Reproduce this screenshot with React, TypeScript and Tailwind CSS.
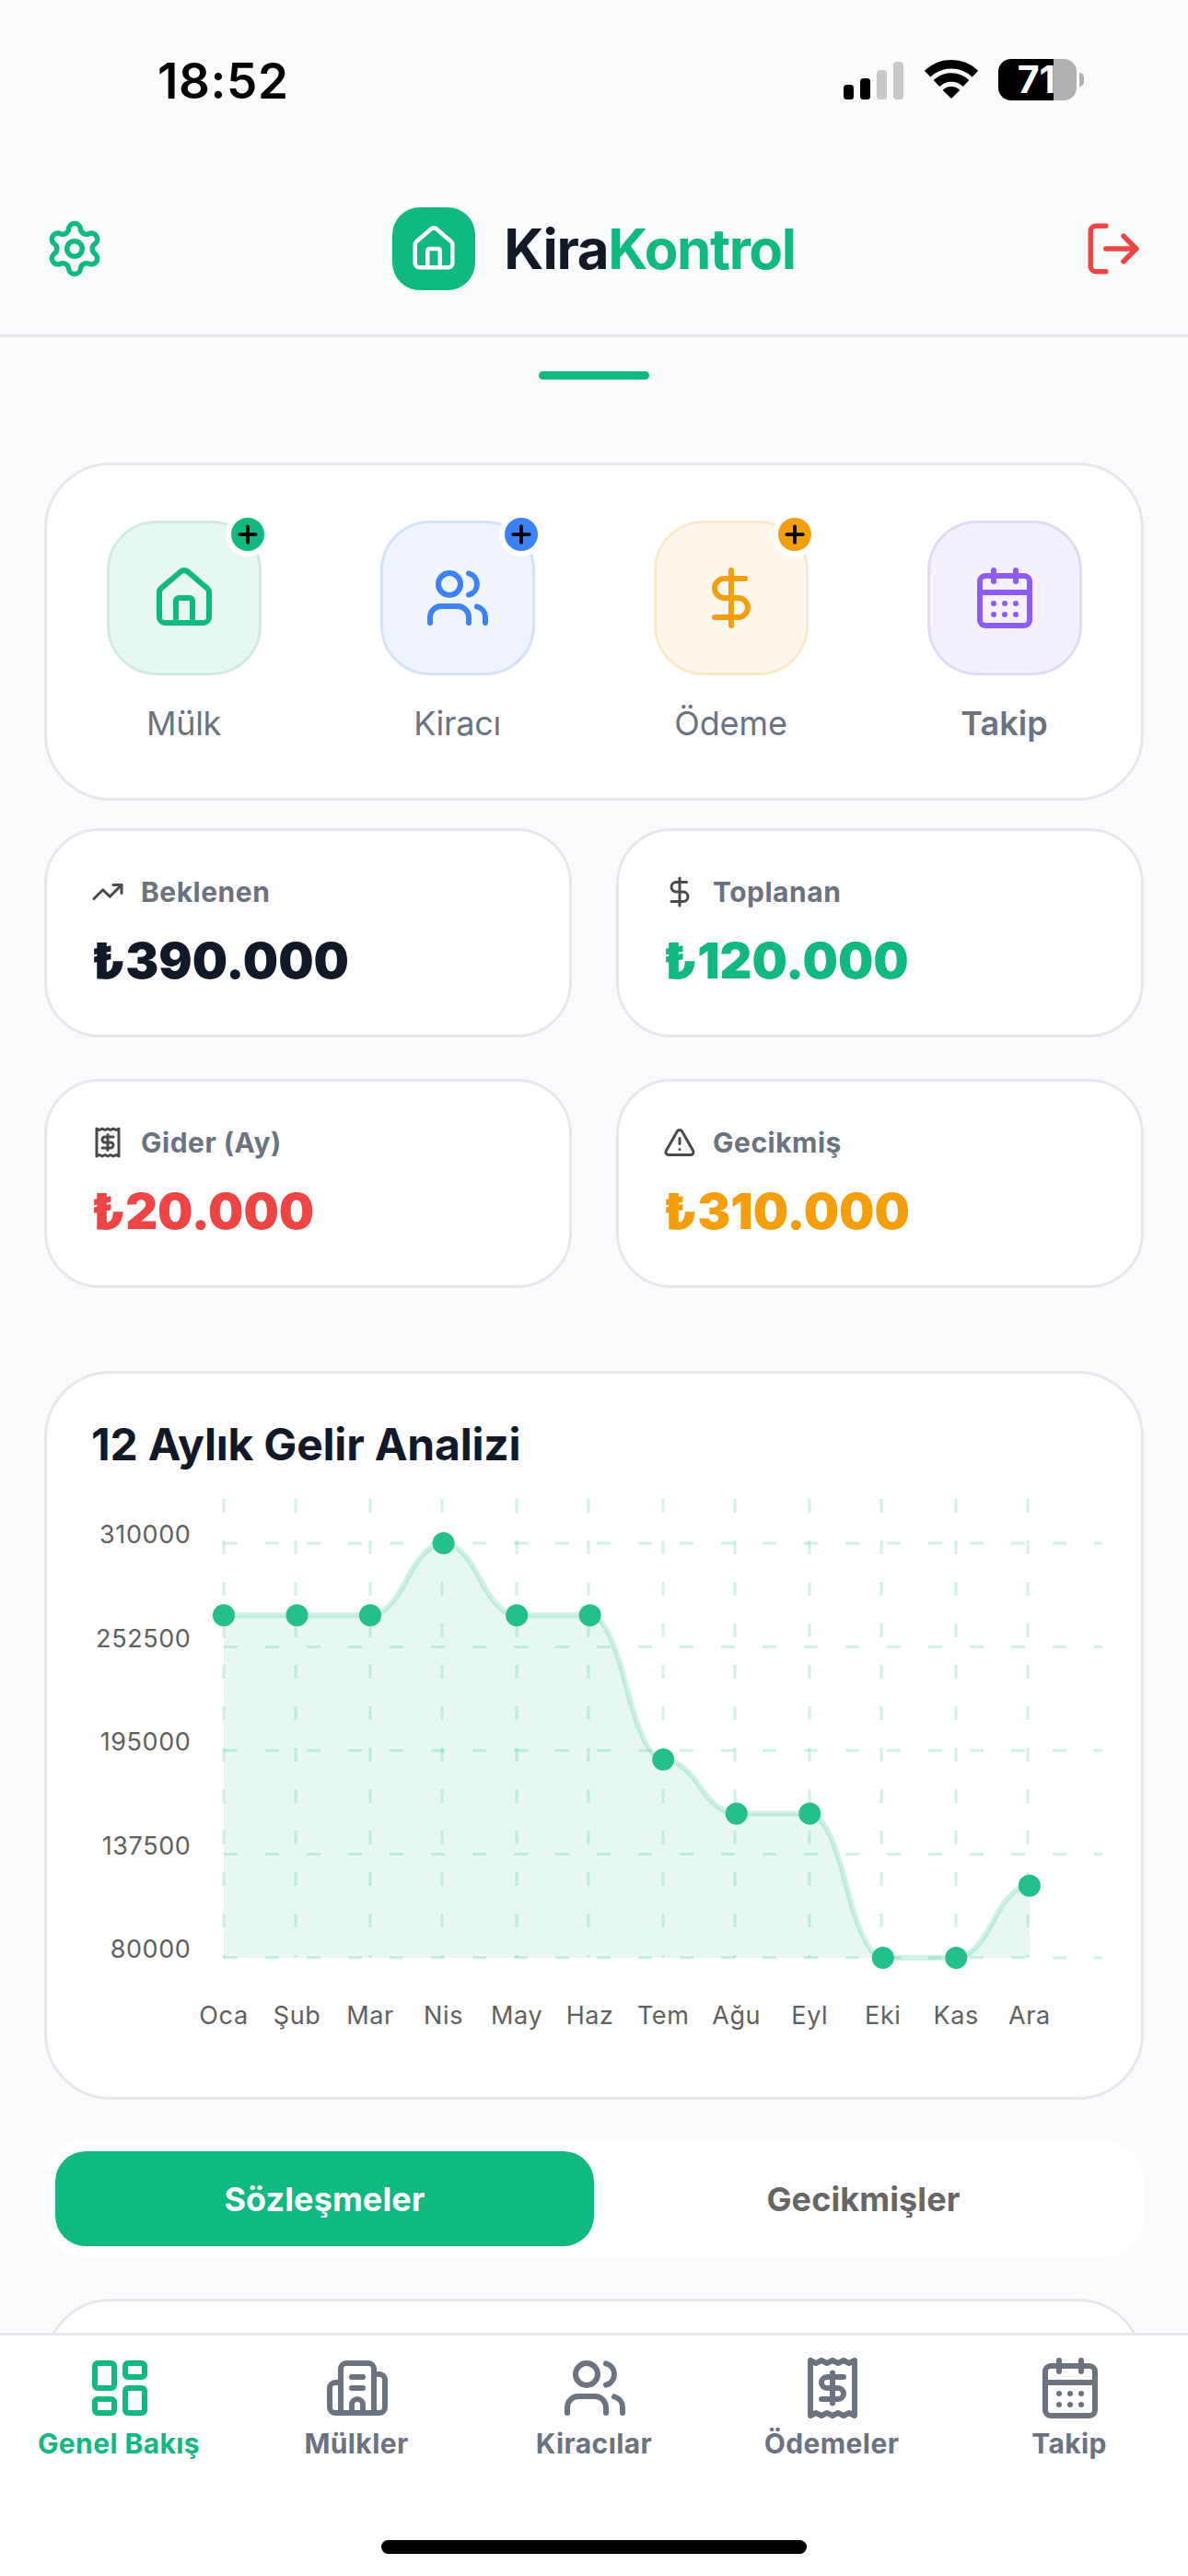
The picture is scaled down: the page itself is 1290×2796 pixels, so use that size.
import React from "react";
import {
  Building2,
  CalendarDays,
  DollarSign,
  House,
  LayoutDashboard,
  LogOut,
  Plus,
  Receipt,
  Settings,
  TrendingUp,
  TriangleAlert,
  Users,
} from "lucide-react";

const months = ["Oca", "Şub", "Mar", "Nis", "May", "Haz", "Tem", "Ağu", "Eyl", "Eki", "Kas", "Ara"];
const income = [270000, 270000, 270000, 310000, 270000, 270000, 190000, 160000, 160000, 80000, 80000, 120000];
const ticks = [310000, 252500, 195000, 137500, 80000];

function StatusBar() {
  return (
    <div className="flex h-[180px] items-start justify-between pl-[171px] pr-[113px]">
      <span className="mt-[56px] text-[53px] leading-[64px] font-semibold tracking-[0.6px] text-black">18:52</span>
      <div className="mt-[64px] flex h-[45px] items-center">
        <svg width="66" height="42" viewBox="0 0 66 42">
          <rect x="0" y="26" width="11" height="16" rx="3.5" fill="#000" />
          <rect x="18" y="19" width="11" height="23" rx="3.5" fill="#000" />
          <rect x="36" y="10" width="11" height="32" rx="3.5" fill="#c8c9ca" />
          <rect x="54" y="1" width="11" height="41" rx="3.5" fill="#c8c9ca" />
        </svg>
        <svg className="ml-[22px]" width="58" height="43" viewBox="0 0 58 43">
          <g fill="none" stroke="#000" strokeWidth="9.4">
            <path d="M3.100 15.200A37.300 37.300 0 0 1 54.900 15.200" />
            <path d="M13 25.500A23 23 0 0 1 45 25.500" />
          </g>
          <path d="M29 41.500L20.200 32.800A13 13 0 0 1 37.800 32.800Z" stroke="#000" strokeLinejoin="round" />
        </svg>
        <div className="ml-[22px] flex h-[45px] w-[85px] items-center justify-center rounded-[14px] bg-linear-to-r from-black from-[60px] to-[#b0b1b2] to-[60px]">
          <span className="-ml-[2px] text-[41px] leading-[45px] font-bold text-white">71</span>
        </div>
        <div className="ml-[3px] h-[15px] w-[5px] rounded-r-full bg-[#b0b1b2]" />
      </div>
    </div>
  );
}

function Header() {
  return (
    <header className="flex h-[186px] items-start justify-between border-b-[3px] border-[#e5e7eb] px-12 pt-[45px]">
      <Settings className="mt-3 text-[#10b981]" size={66} strokeWidth={2} />
      <div className="flex h-[90px] items-center gap-[31px]">
        <div className="flex size-[90px] items-center justify-center rounded-[30px] bg-[#10b981] text-white">
          <House size={54} strokeWidth={2} />
        </div>
        <h1 className="text-[60px] leading-[72px] font-bold tracking-[-1.350px] text-[#111827]">
          Kira<span className="text-[#10b981]">Kontrol</span>
        </h1>
      </div>
      <LogOut className="mt-3 text-[#ef4444]" size={66} strokeWidth={2} />
    </header>
  );
}

const actions = [
  { label: "Mülk", icon: House, tile: "bg-[#e7f8f2] border-[#cfeae0] text-[#10b981]", badge: "bg-[#10b981]", text: "font-normal tracking-[-0.300px]" },
  { label: "Kiracı", icon: Users, tile: "bg-[#eff4ff] border-[#d3e1f6] text-[#3b82f6]", badge: "bg-[#3b82f6]", text: "font-normal tracking-[-0.300px]" },
  { label: "Ödeme", icon: DollarSign, tile: "bg-[#fef8ec] border-[#fae9c9] text-[#f59e0b]", badge: "bg-[#f59e0b]", text: "font-normal tracking-[-0.100px]" },
  { label: "Takip", icon: CalendarDays, tile: "bg-[#f4f0ff] border-[#e0d8f4] text-[#8b5cf6]", badge: "", text: "font-semibold tracking-[0.100px]" },
];

function QuickActions() {
  return (
    <section className="mt-[90px] grid h-[367px] grid-cols-4 rounded-[72px] border-[3px] border-[#e5e7eb] bg-white pt-[60px]">
      {actions.map(({ label, icon: Icon, tile, badge, text }) => (
        <div key={label} className="flex flex-col items-center">
          <div className={"relative flex size-[168px] items-center justify-center rounded-[54px] border-[3px] " + tile}>
            <Icon size={72} strokeWidth={2} />
            {badge && (
              <div className={"absolute -top-3 -right-3 flex size-12 items-center justify-center rounded-full border-[6px] border-white text-black " + badge}>
                <Plus className="shrink-0" size={30} strokeWidth={3} />
              </div>
            )}
          </div>
          <span className={"mt-[30px] text-[36px] leading-[44px] text-[#6b7280] " + text}>{label}</span>
        </div>
      ))}
    </section>
  );
}

const stats = [
  { label: "Beklenen", value: "₺390.000", icon: TrendingUp, color: "text-[#111827]" },
  { label: "Toplanan", value: "₺120.000", icon: DollarSign, color: "text-[#10b981]" },
  { label: "Gider (Ay)", value: "₺20.000", icon: Receipt, color: "text-[#ef4444]" },
  { label: "Gecikmiş", value: "₺310.000", icon: TriangleAlert, color: "text-[#f59e0b]" },
];

function Stats() {
  return (
    <section className="mt-[30px] grid grid-cols-2 gap-x-12 gap-y-[45px]">
      {stats.map(({ label, value, icon: Icon, color }) => (
        <div key={label} className="h-[227px] rounded-[60px] border-[3px] border-[#e5e7eb] bg-white px-12 pt-[48px]">
          <div className="flex h-9 items-center gap-[18px]">
            <Icon size={36} strokeWidth={2} className="text-[#4a4a4a]" />
            <span className="text-[30px] leading-9 font-bold tracking-[0.500px] text-[#6b7280]">{label}</span>
          </div>
          <div className={"mt-[25px] text-[54px] leading-[64px] font-black " + color}>{value}</div>
        </div>
      ))}
    </section>
  );
}

const LEFT = 192;
const TOP = 54;
const STEP = 79.53;
const px = (i: number) => LEFT + i * STEP;
const py = (v: number) => TOP + ((310000 - v) / 230000) * 450;

function Chart() {
  let line = `M${px(0)},${py(income[0])}`;
  for (let i = 0; i < income.length - 1; i++) {
    const mid = (px(i) + px(i + 1)) / 2;
    const midY = (py(income[i]) + py(income[i + 1])) / 2;
    line += ` Q${(mid + px(i)) / 2},${py(income[i])} ${mid},${midY}`;
    line += ` Q${(mid + px(i + 1)) / 2},${py(income[i + 1])} ${px(i + 1)},${py(income[i + 1])}`;
  }
  const bottom = py(80000);
  return (
    <section className="mt-[90px] h-[791px] rounded-[72px] border-[3px] border-[#e5e7eb] bg-white pt-[48px]">
      <h2 className="px-12 text-[48px] leading-[58px] font-bold tracking-[-0.200px] text-[#111827]">12 Aylık Gelir Analizi</h2>
      <svg className="mt-[24px] block" width="1188" height="620" viewBox="0 0 1188 620">
        <path d={`${line} L${px(11)},${bottom} L${px(0)},${bottom} Z`} fill="#10b981" fillOpacity="0.1" />
        <g stroke="#10b981" strokeOpacity="0.2" strokeWidth="3" strokeDasharray="15 30">
          {ticks.map((t) => (
            <line key={t} x1={LEFT} x2="1146" y1={py(t)} y2={py(t)} />
          ))}
          {months.map((m, i) => (
            <line key={m} x1={Math.floor(px(i) / 3) * 3} x2={Math.floor(px(i) / 3) * 3} y1="6" y2={bottom} />
          ))}
        </g>
        <path d={line} fill="none" stroke="#10b981" strokeOpacity="0.2" strokeWidth="6" />
        {income.map((v, i) => (
          <circle key={i} cx={px(i)} cy={py(v)} r="12" fill="#23c08c" />
        ))}
        <g fill="#606060" fontSize="27" letterSpacing="0.6">
          {ticks.map((t) => (
            <text key={t} x="156.5" y={py(t)} textAnchor="end">
              {t}
            </text>
          ))}
          {months.map((m, i) => (
            <text key={m} x={px(i)} y="576" textAnchor="middle">
              {m}
            </text>
          ))}
        </g>
      </svg>
    </section>
  );
}

function Segments() {
  return (
    <div className="mt-[44px] grid h-[127px] grid-cols-2 rounded-[45px] bg-white p-3 text-[36px] font-bold tracking-[0.100px]">
      <button className="rounded-[33px] bg-[#10b981] text-white">Sözleşmeler</button>
      <button className="text-[#666666]">Gecikmişler</button>
    </div>
  );
}

const tabs = [
  { label: "Genel Bakış", icon: LayoutDashboard, color: "text-[#10b981]" },
  { label: "Mülkler", icon: Building2, color: "text-[#6b7280]" },
  { label: "Kiracılar", icon: Users, color: "text-[#6b7280]" },
  { label: "Ödemeler", icon: Receipt, color: "text-[#6b7280]" },
  { label: "Takip", icon: CalendarDays, color: "text-[#6b7280]" },
];

function TabBar() {
  return (
    <nav className="flex h-[264px] shrink-0 flex-col items-center justify-between border-t-[3px] border-[#e5e7eb] bg-white pt-[21px] pb-6">
      <div className="grid w-full grid-cols-5">
        {tabs.map(({ label, icon: Icon, color }) => (
          <div key={label} className={"flex flex-col items-center " + color}>
            <Icon className="ml-[2px]" size={72} strokeWidth={2} />
            <span className="mt-[6px] text-[30px] leading-9 font-bold tracking-[0.400px]">{label}</span>
          </div>
        ))}
      </div>
      <div className="h-[15px] w-[462px] rounded-full bg-black" />
    </nav>
  );
}

export default function App() {
  return (
    <div className="flex h-[2796px] w-[1290px] flex-col overflow-hidden bg-[#f9fbfd] font-['Inter',sans-serif]">
      <StatusBar />
      <Header />
      <main className="min-h-0 flex-1 overflow-hidden px-12 pt-[37px]">
        <div className="mx-auto h-[9px] w-[120px] rounded-full bg-[#10b981]" />
        <QuickActions />
        <Stats />
        <Chart />
        <Segments />
        <section className="mt-[45px] h-[300px] rounded-[72px] border-[3px] border-[#e5e7eb] bg-white" />
      </main>
      <TabBar />
    </div>
  );
}
